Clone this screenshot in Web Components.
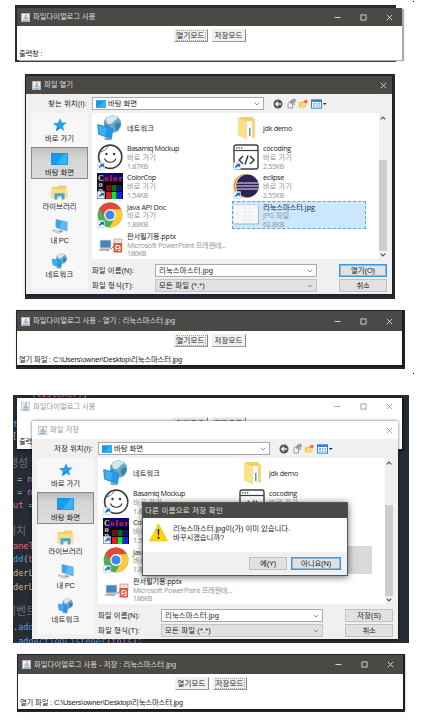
<!DOCTYPE html>
<html lang="ko">
<head>
<meta charset="utf-8">
<title>파일다이얼로그 사용</title>
<style>
html,body{margin:0;padding:0}
body{width:426px;height:722px;overflow:hidden;background:#fff;color:#222;position:relative;
font:7.4px/1 "Liberation Sans","Noto Sans CJK KR",sans-serif}
main{display:flex;flex-direction:column;align-items:flex-start;padding-top:5px}
.dot{position:absolute;left:413px;width:1px;height:1px;background:#000}
</style>
</head>
<body>
<main>
<screen-shot style="--w:381px;--h:57px;margin-left:15px">
 <java-frame style="left:2px;top:3px;--th:18px;--h:52px;--bt:3px;--lt:8px;--sh:2px 1px 1px #aaa" heading="파일다이얼로그 사용" tw="62.5" focus="open" out="출력창 :" ow="23"></java-frame>
</screen-shot>
<screen-shot style="--w:370px;--h:225px;margin:12px 0 0 25px">
 <file-dialog style="left:1px;top:2px" mode="open"></file-dialog>
</screen-shot>
<screen-shot style="--w:389px;--h:59px;margin:11px 0 0 16px">
 <java-frame style="left:1px;top:1px;--th:20px;--h:54px;--bt:3px;--lt:9px" heading="파일다이얼로그 사용 - 열기 : 리눅스마스터.jpg" tw="142" focus="open" out="열기 파일 : C:\Users\owner\Desktop\리눅스마스터.jpg" ow="163"></java-frame>
</screen-shot>
<screen-shot style="--w:396px;--h:248px;margin:26px 0 0 13px">
 <code-backdrop></code-backdrop>
 <java-frame inactive style="left:4px;top:3px;--th:17px;--h:51px;--bt:2px;--lt:8px" heading="파일다이얼로그 사용" tw="62.5" focus="none" out="출력창 :" ow="23"></java-frame>
 <file-dialog style="left:19px;top:26px" mode="save"></file-dialog>
 <confirm-box style="left:130px;top:108px"></confirm-box>
</screen-shot>
<screen-shot style="--w:388px;--h:58px;margin:11px 0 0 17px">
 <java-frame style="left:1px;top:1px;--th:19px;--h:54px;--bt:3px;--lt:9px" heading="파일다이얼로그 사용 - 저장 : 리눅스마스터.jpg" tw="142" focus="save" out="열기 파일 : C:\Users\owner\Desktop\리눅스마스터.jpg" ow="163"></java-frame>
</screen-shot>
</main>
<i class="dot" style="top:1px"></i><i class="dot" style="top:373px"></i>

<script>
const def=(name,render,after)=>customElements.define(name,class extends HTMLElement{
  connectedCallback(){
    if(this.shadowRoot)return;
    const t=document.createElement('template');
    t.innerHTML=render(this);
    this.attachShadow({mode:'open'}).appendChild(t.content.cloneNode(true));
    if(after)after(this);
  }
});

/* Text spaced out to a given width */
def('fit-text',()=>`<style>:host{display:block;white-space:pre;flex:none}span{display:inline-block}</style><span><slot></slot></span>`,
 el=>{
  const w=+el.getAttribute('w');
  if(!w)return;
  const s=el.shadowRoot.querySelector('span');
  const nat=s.getBoundingClientRect().width;
  s.style.letterSpacing=((w-nat)/el.textContent.length)+'px';
 });

const screenIcon='<path d="M0 0h18v13H0z" fill="#159bf0"/><path d="M18 0v13H5L15 0z" fill="#35b3fb"/><path d="M.3.3h17.4v12.4H.3z" fill="none" stroke="#0b86d8" stroke-width=".6"/>';
const shortcut='<path d="M.5 18.5h7v7h-7z" fill="#eef6fc" stroke="#b9c8d4" stroke-width=".5"/><path d="M2 24.3c0-2.2.8-3 2.3-3.3l-1-1.3h3.6v3.8l-1.1-1.2c-1.4.2-2.2.8-3.8 2z" fill="#1668b8"/>';
const globe='<circle cx="15.5" cy="9" r="8.7" fill="#6ba9c9"/><path d="M9 4c3-4 9-4 12-1-1 2-3 1-4 3s-3 3-5 3-3-3-3-5z" fill="#d4e8f0"/><path d="M19 8c2-1 4 0 5 1-1 4-3 6-5 7-1-3-2-5 0-8z" fill="#3d83ab"/><path d="M8 9c3 0 5 2 5 5l-2 2C8 14 7 12 8 9z" fill="#488fb5"/>';
const monitor='<path d="M.7 9.6l15 4-1.2 10.2-12.9-4.6z" fill="#37b0f6" stroke="#147ec2" stroke-width=".8"/><path d="M10 12l5.7 1.6-1.2 10.2-6.5-2.4z" fill="#1f9aec"/><path d="M8 22l4 1.2 2 .6.4 1.4-7-.4z" fill="#8b9aa5"/>';
const ICONS={
 java:['0 0 10 10','<rect x=".3" y=".3" width="9.4" height="9.4" fill="#e9eff5" stroke="#9db4c8" stroke-width=".6"/><path d="M5.4 1c.9 1.3-1.5 1.8-.5 3.6M6.5 2.5c-.8.5-1 .9-.5 1.9" fill="none" stroke="#e07a35" stroke-width=".8"/><path d="M2.8 5.3h4M3 6.6h3.6M2 8.1c2 .7 4.7.6 6-.1M6.9 5.4c1.3 0 1 1.1-.1 1.4" fill="none" stroke="#4f7fa8" stroke-width=".7"/>'],
 screen:['0 0 18 13',screenIcon],
 star:['0 0 16 15','<path d="M8.7.3l1.9 4.5 5.1.1-4 3.6 1.5 5.2-4.6-2.6-4.3 3.2 1.1-5.3L1 5.8l5.4-.6z" fill="#239fee"/><path d="M1 5.8L5.4 9l-1.1 5.3 4.3-3.2z" fill="#1489dc"/>'],
 library:['0 0 17 15','<path d="M.5 2h6l1.2-1.6h7.6V13H.5z" fill="#f4cd63"/><path d="M.5 4h16v9.5H.5z" fill="#fbdf87"/><path d="M3.5 14.5V8.2h10v6.3h-2.8v-3.2H6.3v3.2z" fill="#39a9e6"/>'],
 pc:['0 0 18 17','<path d="M4.5.7L17 3.5v9.8L4.5 9.5z" fill="#2ea8f5" stroke="#8a9cab" stroke-width=".9"/><path d="M11 2.2l5.6 1.4v9L8 10.3z" fill="#55c0fb"/><path d="M9 12.2l4 1.3-2 2-5-1.6z" fill="#9aa8b3"/><path d="M1 11.8l8.5 3-1.5 1.7-7.6-3z" fill="#d7dde2" stroke="#8897a3" stroke-width=".5"/>'],
 network:['0 0 26 26',globe+monitor],
 face:['0 0 26 26','<circle cx="13.2" cy="12.8" r="11.6" fill="#fff" stroke="#3d3d3d" stroke-width="1.7"/><path d="M3.5 8C7 7 10 5 11.5 1.5" fill="none" stroke="#3d3d3d" stroke-width=".7"/><circle cx="9.5" cy="10" r="1.2" fill="#333"/><circle cx="17" cy="10" r="1.2" fill="#333"/><path d="M7.5 14.5c1.7 5 9.7 5 11.5 0" fill="none" stroke="#333" stroke-width="1.1"/>'+shortcut],
 chrome:['0 0 26 26','<circle cx="13" cy="13" r="12.4" fill="#4caf50"/><path d="M13 13L2.3 6.8A12.4 12.4 0 0 1 24 7.2H13z" fill="#e2493b"/><path d="M2.3 6.8L8 16l5-3V7.2z" fill="#e2493b"/><path d="M13 7.2h11A12.4 12.4 0 0 1 12.3 25.4L18.3 15z" fill="#fccb3d"/><circle cx="13" cy="13" r="5.9" fill="#fff"/><circle cx="13" cy="13" r="4.6" fill="#4586ee"/>'+shortcut],
 pptx:['0 0 26 26','<path d="M3 9h11v8H3z" fill="#4b83bb" stroke="#d6dce2" stroke-width=".8"/><path d="M1 19.5l3-2h10l-2.5 2.5z" fill="#a3adb7"/><path d="M17 8h8v7h-8z" fill="#e6e3e2" stroke="#b1645a" stroke-width=".5"/><path d="M14 18l4-4" stroke="#777" stroke-width="1"/><rect x="16.5" y="12" width="8.5" height="9.5" fill="#e0593a"/><path d="M19 19.500v-5h2.300a1.500 1.500 0 0 1 0 3H19M23 16v3.500h-2" stroke="#fff" stroke-width="1" fill="none"/>'],
 folder:['0 0 26 26','<path d="M5 3.500l3-1.500h12v20H10z" fill="#f0cd68"/><path d="M14 6h5v17h-5z" fill="#f6f8f9"/><path d="M16 13h1.500v8H16z" fill="#4b9fd0"/><path d="M5 3.500l9 2.500v18.500l-9-4z" fill="#fbe08c"/><path d="M19 4h3v18l-3 1z" fill="#f6d67a"/>'],
 coding:['0 0 26 26','<rect x="1" y="1" width="24" height="24" rx="2" fill="#fff" stroke="#3b3e42" stroke-width="1.400"/><path d="M1 6.500h24" stroke="#3b3e42" stroke-width="1.200"/><path d="M3 3.800h1.300M5.500 3.800h1.300M8 3.800h1.300" stroke="#333" stroke-width="1.200"/><path d="M10 12l-3.800 4 3.800 4M17 12l4 4-4 4M15 11.500l-3 9" fill="none" stroke="#34373b" stroke-width="1.500"/>'+shortcut],
 eclipse:['0 0 26 26','<circle cx="12.500" cy="13" r="12" fill="#f7941e"/><circle cx="14" cy="13" r="11.600" fill="#fff"/><circle cx="14.500" cy="13" r="11.400" fill="#2c2255"/><path d="M3.500 10h22M3 13h23M3.500 16h22" stroke="#e8e6f2" stroke-width="1.200"/>'+shortcut],
 sheet:['0 0 26 26','<path d="M.3 3h25v19H.3z" fill="#f9f9fa" stroke="#c4ccd6" stroke-width=".6"/><path d="M5 3v19M8 6h15M8 10h15M8 14h15M8 18h15M12 4v17M17 4v17M1 12h3" stroke="#e6e2e8" stroke-width=".6"/><path d="M1 22h24.500V4" fill="none" stroke="#9dacb9" stroke-width=".8"/>'],
 back:['0 0 10 10','<circle cx="5" cy="5" r="4.500" fill="#555"/><path d="M8 5H3M5 2.700L2.700 5 5 7.300" fill="none" stroke="#ececec" stroke-width="1.300"/>'],
 up:['0 0 10 10','<path d="M3 3h3.500v6H2V4.500z" fill="#f6f6f6" stroke="#777" stroke-width=".7"/><path d="M5 5V2h3v4M6.500.700L5 2M7 .500h2v2.500" fill="none" stroke="#666" stroke-width=".9"/>'],
 newf:['0 0 11 10','<path d="M1 3h3l1-1h4v6.500H1z" fill="#e9b84a"/><path d="M1 9l2-5h7L8 9z" fill="#fbd977"/><circle cx="8.700" cy="2.200" r="1.900" fill="#f0693a"/>'],
 view:['0 0 16 10','<rect x=".5" y=".8" width="10" height="8.300" fill="#fff" stroke="#2d82d6"/><path d="M.5 2h10" stroke="#2d82d6" stroke-width="2"/><path d="M2 4.800h2M5 4.800h1.500M7.500 4.800h1.500M2 7h2M5 7h1.500M7.500 7h1.500" stroke="#4a94dc" stroke-width="1.200"/><path d="M12 4h3.600L13.800 6z" fill="#222"/>'],
 warn:['0 0 19 19','<path d="M9.500.800L18.500 18H.5z" fill="#fdd30c" stroke="#e8b800" stroke-width=".6" stroke-linejoin="round"/><path d="M8.600 6h1.800l-.4 6.500h-1z" fill="#222"/><circle cx="9.500" cy="14.800" r="1.100" fill="#222"/>'],
 chev:['0 0 6 4','<path d="M.7.700L3 3 5.300.700" fill="none" stroke="#888" stroke-width=".9"/>'],
 aup:['0 0 6 4','<path d="M.7 3.300L3 1l2.300 2.300" fill="none" stroke="#555" stroke-width="1.200"/>'],
 adown:['0 0 6 4','<path d="M.7.700L3 3 5.300.700" fill="none" stroke="#555" stroke-width="1.200"/>'],
 min:['0 0 7 7','<path d="M.5 3.500h6" stroke="currentColor" stroke-width=".9"/>'],
 max:['0 0 7 7','<path d="M.9.900h5.200v5.200H.900z" fill="none" stroke="currentColor" stroke-width=".9"/>'],
 close:['0 0 7 7','<path d="M.8.800l5.400 5.400M6.200.800L.8 6.200" stroke="currentColor" stroke-width=".9"/>'],
 colors:['0 0 26 26','<path d="M0 0h26v26H0z" fill="#000"/><path d="M0 0h26v9H0z" fill="#0b0a6c"/><path d="M0 9h7v17H0z" fill="#0b0a6c"/><path d="M9 12h5v6H9z" fill="#7e0b10"/><path d="M14.500 12h5v6h-5z" fill="#0a6a1c"/><path d="M20 12h5v6h-5z" fill="#11117c"/><path d="M9 19h5v7H9z" fill="#ee1620"/><path d="M14.500 19h5v7h-5z" fill="#12e53a"/><path d="M20 19h5v7h-5z" fill="#1a22f0"/><g font-family="Liberation Serif" font-weight="700" font-size="8"><text x="1" y="7.500" fill="#f0e010">C</text><text x="7" y="7.500" fill="#ee1c1c" textLength="18">olor</text><text x="1.500" y="14" fill="#f0e010">o</text><text x="1.500" y="20" fill="#f0e010">p</text></g>'+shortcut]
};
def('app-icon',el=>{const [vb,b]=ICONS[el.getAttribute('name')];
 return `<style>:host{display:block;flex:none}svg{display:block;width:100%;height:100%}</style><svg viewBox="${vb}">${b}</svg>`});

def('screen-shot',()=>`<style>:host{display:block;position:relative;flex:none;width:var(--w);height:var(--h);background:#272b34}</style><slot></slot>`);

def('title-bar',el=>`<style>
:host{display:flex;align-items:center;box-sizing:border-box;background:#4b4946;color:#dedede;padding:0 9px 0 4px;gap:3px}
:host([inactive]){background:#fff;color:#999}
app-icon.j{width:9px;height:9px}.sp{flex:1}
.b{width:7px;height:7px}.bs{display:flex;gap:19px}
</style><app-icon class="j" name="java"></app-icon><slot></slot><span class="sp"></span>
<div class="bs">${el.hasAttribute('dialog')?'':'<app-icon class="b" name="min"></app-icon><app-icon class="b" name="max"></app-icon>'}<app-icon class="b" name="close"></app-icon></div>`);

def('awt-button',()=>`<style>
:host{display:flex;align-items:center;justify-content:center;box-sizing:border-box;width:34px;height:13px;background:#f0f0f0;border:1px solid #f0f0f0;border-right-color:#888;border-bottom-color:#999;color:#222}
div{padding:1px 0 1px;border:1px dotted transparent}
:host([focused]) div{border-color:#aaa}
</style><div><slot></slot></div>`);

def('java-frame',el=>{const a=n=>el.getAttribute(n),f=a('focus'),i=el.hasAttribute('inactive')?'inactive':'';
return `<style>
:host{position:absolute;display:flex;flex-direction:column;width:385px;height:var(--h);background:#fff;box-shadow:var(--sh,1px 1px 2px 1px #0006)}
title-bar{height:var(--th)}
.btns{display:flex;justify-content:center;gap:4px;padding-top:var(--bt)}
.out{padding:var(--lt) 0 0 2px}
</style><title-bar ${i}><fit-text w="${a('tw')}">${a('heading')}</fit-text></title-bar>
<div class="btns"><awt-button ${f=='open'?'focused':''}><fit-text w="28">열기모드</fit-text></awt-button><awt-button ${f=='save'?'focused':''}><fit-text w="28">저장모드</fit-text></awt-button></div>
<div class="out"><fit-text w="${a('ow')}">${a('out')}</fit-text></div>`});

def('side-item',el=>{const a=n=>el.getAttribute(n);return `<style>
:host{display:flex;flex-direction:column;align-items:center;box-sizing:border-box;width:57px;height:32px;border:1px solid transparent;margin-bottom:2px}
:host([selected]){background:linear-gradient(#bdbdbd,#d4d4d4 30%,#dcdcdc);border-color:#888}
.i{height:21px;display:flex;align-items:center;justify-content:center}
app-icon{width:${a('iw')}px;height:${a('ih')}px}
</style><div class="i"><app-icon name="${a('icon')}"></app-icon></div><fit-text w="${a('w')}">${a('label')}</fit-text>`});

def('file-item',el=>{const a=n=>el.getAttribute(n),t=(k,c)=>{if(!a(k))return'';const [s,w]=a(k).split('|');return `<fit-text class="${c}" w="${w}">${s}</fit-text>`};
return `<style>
:host{display:flex;align-items:center;gap:4px;box-sizing:border-box;width:134px;height:28px;border:1px solid transparent;font-family:"Open Sans","Noto Sans CJK KR",sans-serif;font-size:7.2px}
:host([selected]){background:#cce8ff;border:1px dashed #6f9fc4}
:host([selected=gray]){background:#d9d9d9;border-color:#d9d9d9}
app-icon{width:26px;height:26px}
.t{display:flex;flex-direction:column;padding-top:1px}
.t fit-text{height:8.700px;line-height:8.700px}
.n{color:#222}.s{color:#939393}
</style><app-icon name="${a('icon')}"></app-icon><div class="t">${t('n','n')}${t('s','s')}${t('z','s')}</div>`});

def('combo-box',()=>`<style>
:host{display:flex;align-items:center;box-sizing:border-box;height:13px;border:1px solid #a9a9a9;background:#fff;padding:0 3px}
:host([gray]){background:#e1e1e1;border-color:#c4c4c4}
.sp{flex:1}app-icon{width:6px;height:4px}
</style><slot></slot><span class="sp"></span><app-icon name="chev"></app-icon>`);

def('push-button',()=>`<style>
:host{display:flex;align-items:center;justify-content:center;box-sizing:border-box;height:13px;background:#e1e1e1;border:1px solid #c0c0c0}
:host([primary]){border:1px solid #3b96dd;box-shadow:inset 0 0 0 .500px #3b96dd}
</style><slot></slot>`);

def('file-dialog',el=>{const save=el.getAttribute('mode')=='save';return `<style>
:host{position:absolute;display:grid;grid-template:18px 19px 146px 35px / 61px 1fr;width:366px;height:218px;background:#f0f0f0;box-sizing:border-box;padding:0 5px;box-shadow:0 0 3px #0009}
title-bar{grid-column:1/3;margin:0 -5px;padding-left:6px;padding-right:5px}
.tools{grid-column:1/3;display:flex;align-items:center}
.tools .l{width:56px;display:flex;justify-content:flex-end;margin-right:5px}
.tools combo-box{width:172px}
.tools combo-box app-icon{width:10px;height:8px;margin-right:2px}
.ic{display:flex;gap:2.500px;margin-left:9px}
.ic app-icon{width:10px;height:10px}.ic app-icon.v{width:16px}
.side{grid-row:3/5;grid-column:1;width:57px;background:#f7f7f7;height:176px}
.list{display:flex;background:#fff}
.files{flex:1;display:grid;grid-template-columns:136px 136px;grid-auto-flow:column;grid-template-rows:repeat(5,29.200px);padding-left:4px;align-items:center;justify-content:start}
.scroll{width:8px;background:#f0f0f0;display:flex;flex-direction:column;align-items:center;justify-content:space-between;padding:3px 0 2px;box-sizing:border-box}
.scroll app-icon{width:6px;height:4px}
.thumb{width:8px;height:91px;background:#cdcdcd;margin-top:37px}
.foot{display:grid;grid-template-columns:63px 162px 22px 48px;row-gap:2px;align-content:start;align-items:center;padding-top:5px}
</style>
<title-bar dialog ${save?'inactive':''}><fit-text w="29">${save?'파일 저장':'파일 열기'}</fit-text></title-bar>
<div class="tools"><div class="l"><fit-text w="39">${save?'저장':'찾는'} 위치(I):</fit-text></div>
<combo-box><app-icon name="screen"></app-icon><fit-text w="29">바탕 화면</fit-text></combo-box>
<div class="ic"><app-icon name="back"></app-icon><app-icon name="up"></app-icon><app-icon name="newf"></app-icon><app-icon class="v" name="view"></app-icon></div></div>
<div class="side">
<side-item icon="star" iw="15" ih="14" w="29" label="바로 가기"></side-item>
<side-item selected icon="screen" iw="17" ih="12" w="29" label="바탕 화면"></side-item>
<side-item icon="library" iw="17" ih="15" w="34" label="라이브러리"></side-item>
<side-item icon="pc" iw="16" ih="15" w="18" label="내 PC"></side-item>
<side-item icon="network" iw="16" ih="16" w="28" label="네트워크"></side-item></div>
<div class="list"><div class="files">
<file-item icon="network" n="네트워크|27"></file-item>
<file-item icon="face" n="Basamiq Mockup|52" s="바로 가기|29" z="1.87KB|21"></file-item>
<file-item icon="colors" n="ColorCop|29" s="바로 가기|29" z="1.54KB|21"></file-item>
<file-item icon="chrome" n="Java API Doc|39" s="바로 가기|29" z="1.88KB|21"></file-item>
<file-item icon="pptx" n="판서필기용.pptx|49" s="Microsoft PowerPoint 프레젠테...|99" z="186KB|19"></file-item>
<file-item icon="folder" n="jdk demo|29"></file-item>
<file-item icon="coding" n="cocoding|28" s="바로 가기|29" z="2.55KB|21"></file-item>
<file-item icon="eclipse" n="eclipse|21" s="바로 가기|29" z="2.55KB|21"></file-item>
<file-item selected="${save?'gray':''}" icon="sheet" n="리눅스마스터.jpg|52" s="JPG 파일|26" z="62.8KB|21"></file-item>
</div><div class="scroll"><app-icon name="aup"></app-icon><div class="thumb"></div><app-icon name="adown"></app-icon></div></div>
<div class="foot">
<fit-text w="42">파일 이름(N):</fit-text><combo-box><fit-text w="54">리눅스마스터.jpg</fit-text></combo-box><i></i>
<push-button ${save?'':'primary'}><fit-text w="24">${save?'저장(S)':'열기(O)'}</fit-text></push-button>
<fit-text w="42">파일 형식(T):</fit-text><combo-box gray><fit-text w="46">모든 파일 (*.*)</fit-text></combo-box><i></i>
<push-button><fit-text w="13">취소</fit-text></push-button></div>`});

def('confirm-box',()=>`<style>
:host{position:absolute;display:flex;flex-direction:column;width:204px;height:72px;background:#fff;box-shadow:0 1px 7px 1px #0009;outline:.500px solid #555}
.t{height:15px;display:flex;align-items:center;background:#4b4946;color:#e2e2e2;padding-left:2px}
.m{flex:1;display:flex;gap:5px;padding:5px 0 0 6px}
.m app-icon{width:19px;height:19px}
.x{display:flex;flex-direction:column;gap:1.200px;padding-top:2px}
.f{height:23px;display:flex;justify-content:flex-end;align-items:center;gap:4px;padding-right:6px;background:#f0f0f0}
</style><div class="t"><fit-text w="78">다른 이름으로 저장 확인</fit-text></div>
<div class="m"><app-icon name="warn"></app-icon><div class="x"><fit-text w="117">리눅스마스터.jpg이(가) 이미 있습니다.</fit-text><fit-text w="51">바꾸시겠습니까?</fit-text></div></div>
<div class="f"><push-button style="width:38px"><fit-text w="16">예(Y)</fit-text></push-button><push-button primary style="width:50px"><fit-text w="30">아니요(N)</fit-text></push-button></div>`);

/* Editor lines: top, left, markup */
const CODE=[[-7,18,'<r>(listener)</r>;'],[23,0,'<b>t</b>'],[35,-1,'<g>[</g>'],[63,-5,'<k>생성</k>'],[78,4,'= <m>n</m>'],[91,4,'= <m>n</m>'],[104,0,'<r>ut</r> ='],[131,-7,'<k>배치</k>'],[145,0,'<r>aneT</r>'],[158,0,'<b>dd</b>(<r>b</r>'],[172,0,'<y>derL</y>'],[186,0,'<y>derL</y>'],[211,-7,'<k>이벤트</k>'],[226,0,'.<b>add</b>'],[240,0,'.<b>addActionListener</b>(<m>this</m>);']];
def('code-backdrop',()=>`<style>
:host{display:block;position:absolute;inset:0;overflow:hidden;color:#aeb4c0;font:8.600px/12px "DejaVu Sans Mono","Noto Sans CJK KR",monospace}
div{position:absolute;white-space:pre}
r{color:#e06c75}b{color:#4ea3e6;font-weight:400}g{color:#98c379}k{color:#69707c;font-size:11px}m{color:#c678dd}y{color:#dcb46e}
</style>${CODE.map(([y,x,s])=>`<div style="top:${y}px;left:${x}px">${s}</div>`).join('')}`);
</script>
</body>
</html>
